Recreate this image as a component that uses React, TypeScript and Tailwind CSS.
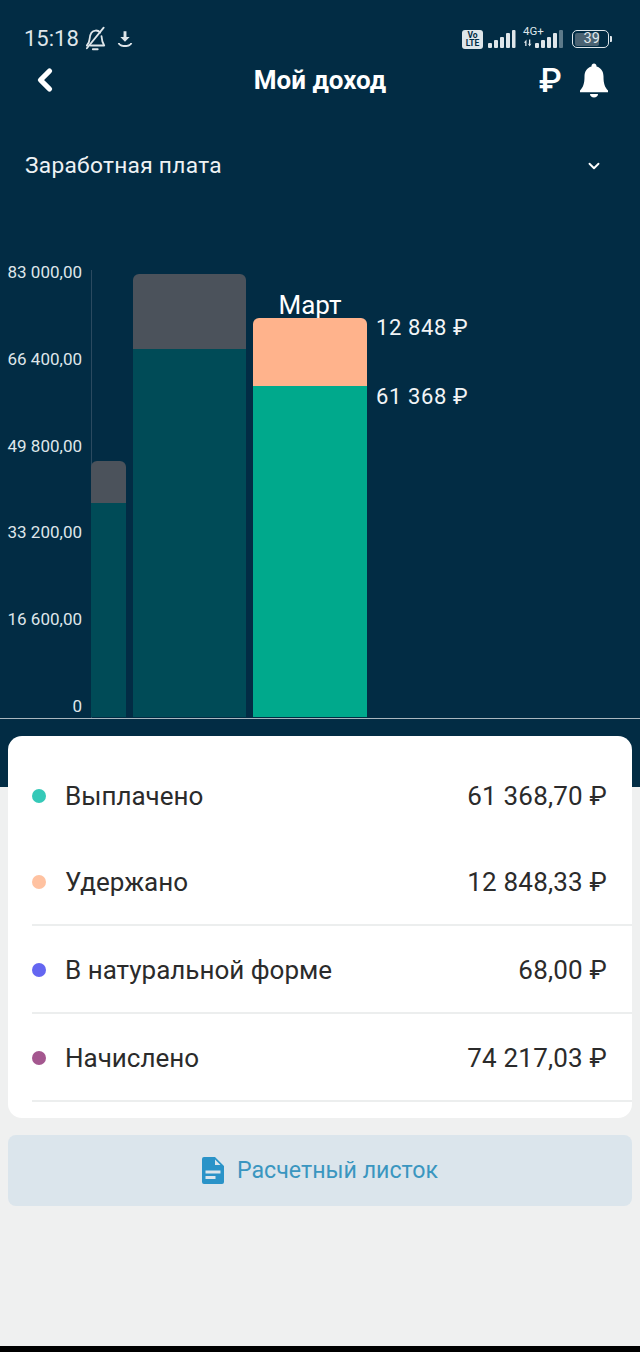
import { ChevronDown, ChevronLeft } from "lucide-react";

const AXIS = ["83 000,00", "66 400,00", "49 800,00", "33 200,00", "16 600,00", "0"];

const ROWS = [
  { label: "Удержано", value: "12 848,33 ₽", dot: "bg-[#ffc2a1]" },
  { label: "В натуральной форме", value: "68,00 ₽", dot: "bg-[#6466f1]" },
  { label: "Начислено", value: "74 217,03 ₽", dot: "bg-[#a4578f]" },
];

function StatusBar() {
  return (
    <div className="flex h-[22px] items-center justify-between pl-6 pr-[28px] text-[#dfe6ea]">
      <div className="flex items-center">
        <span className="text-[22px] leading-none">15:18</span>
        <svg className="ml-[4px] h-[26px] w-[24px]" viewBox="0 0 22 24" fill="none" stroke="currentColor" strokeWidth="1.7" strokeLinecap="round" strokeLinejoin="round">
          <path d="M3.500 18c1.700-1.800 2.300-3.500 2.500-6C6.300 7.500 8 4.500 11.500 4.200c1.800-.1 3.300.6 4.300 1.800M17 9.500c.2 3.500.9 6 2.500 8.500H7" />
          <path d="M9 21.500h4.500" />
          <path d="M3.500 20.500 19 1.500" />
        </svg>
        <svg className="ml-[8px] h-[20px] w-[20px]" viewBox="0 0 18 18" fill="currentColor">
          <path d="M7.700 2h2.600v5.200h2.900L9 11.500 4.800 7.200h2.900z" />
          <path d="M2.500 12.500h1.700c.5 1.200 2.400 2 4.800 2s4.300-.8 4.800-2h1.700c-.5 2.200-3.100 3.600-6.500 3.600s-6-1.400-6.500-3.600z" />
        </svg>
      </div>
      <div className="flex items-center">
        <div className="flex h-[19px] w-[21px] flex-col items-center justify-center rounded-[3px] bg-[#dfe6ea] text-[8.500px] font-bold leading-[8px] text-[#022c44]">
          <span>Vo</span>
          <span>LTE</span>
        </div>
        <svg className="ml-[5px] h-[20px] w-[28px]" viewBox="0 0 28 20" fill="currentColor">
          <rect x="0" y="14" width="4" height="5" rx="1" />
          <rect x="6" y="11" width="4" height="8" rx="1" />
          <rect x="12" y="8" width="4" height="11" rx="1" />
          <rect x="18" y="4" width="4" height="15" rx="1" />
          <rect x="24" y="1" width="3.500" height="18" rx="1" />
        </svg>
        <div className="relative ml-[7px] h-[20px] w-[40px]">
          <span className="absolute left-0 top-[-4px] text-[11.500px] leading-[12px]">4G+</span>
          <svg className="h-[20px] w-[40px]" viewBox="0 0 40 20" fill="currentColor">
            <path d="M1 13.500 3.500 10.500V17H2.200v-3zM6 10.500h1.300V15l1.200-.5L6.600 17.500 4.800 14.500l1.200.5z" />
            <rect x="12" y="14" width="4" height="5" rx="1" />
            <rect x="18" y="11" width="4" height="8" rx="1" />
            <rect x="24" y="8" width="4" height="11" rx="1" />
            <rect x="30" y="4" width="4" height="15" rx="1" />
            <rect x="36" y="1" width="4" height="18" rx="1" fill="#5d7a8a" />
          </svg>
        </div>
        <div className="ml-[9px] flex items-center">
          <div className="flex h-[18px] w-[37px] items-center rounded-[5px] border-[1.500px] border-[#dfe6ea] p-[1.500px]">
            <div className="flex h-full w-[24px] items-center rounded-[2px] bg-[#4a6272] pl-[9px] text-[14.500px] leading-none">
              <span>39</span>
            </div>
          </div>
          <div className="ml-[1px] h-[6px] w-[2px] rounded-r-[1px] bg-[#dfe6ea]" />
        </div>
      </div>
    </div>
  );
}

function Chart() {
  return (
    <div className="mt-[82px] flex h-[457px] items-end border-b border-[#aab7bf]">
      <div className="flex h-[454px] w-[82px] flex-col items-end justify-between self-start text-[17px] leading-[20px] text-[#dfe6ea]">
        {AXIS.map((v) => (
          <span key={v}>{v}</span>
        ))}
      </div>
      <div className="ml-[9px] flex h-[448px] items-end gap-[7px] border-l border-[#2b4a60] pb-px">
        <div className="-ml-px flex h-[256px] w-[35px] flex-col overflow-hidden rounded-t-[6px]">
          <div className="h-[42px] bg-[#4b525b]" />
          <div className="flex-1 bg-[#004b57]" />
        </div>
        <div className="flex h-[443px] w-[113px] flex-col overflow-hidden rounded-t-[6px]">
          <div className="h-[75px] bg-[#4b525b]" />
          <div className="flex-1 bg-[#004b57]" />
        </div>
        <div className="flex w-[114px] flex-col items-center">
          <span className="-mb-[1px] text-[26px] leading-[28px] text-white">Март</span>
          <div className="flex h-[399px] w-full flex-col overflow-hidden rounded-t-[6px]">
            <div className="h-[68px] bg-[#ffb38c]" />
            <div className="flex-1 bg-[#00a98c]" />
          </div>
        </div>
        <div className="ml-[2px] flex h-[399px] flex-col text-[22px] leading-[26px] tracking-[0.6px] text-[#f1f4f6]">
          <span className="mt-[-3px]">12 848 ₽</span>
          <span className="mt-[43px]">61 368 ₽</span>
        </div>
      </div>
    </div>
  );
}

export default function App() {
  return (
    <div className="flex h-[1352px] w-[640px] flex-col overflow-hidden bg-[#eff0f0] font-['Roboto',sans-serif]">
      <div className="h-[787px] shrink-0 bg-[#022c44] pt-[28px] text-white">
        <StatusBar />
        <div className="relative mt-[8px] flex h-[44px] items-center justify-center">
          <ChevronLeft className="absolute left-[27px] h-[36px] w-[36px]" strokeWidth={3.500} />
          <h1 className="text-[26px] font-bold leading-none">Мой доход</h1>
          <span className="absolute left-[539px] text-[33px] font-medium leading-none">₽</span>
          <svg className="absolute left-[578px] h-[36px] w-[32px]" viewBox="0 0 32 36" fill="currentColor">
            <path d="M16 1.500c-1.400 0-2.500 1-2.500 2.400v.6C8.800 5.700 6.500 9.800 6.500 14.500c0 7-1.200 10.500-4.500 14v1.800h28v-1.800c-3.300-3.500-4.500-7-4.500-14 0-4.700-2.300-8.800-7-10v-.6c0-1.400-1.100-2.400-2.500-2.400z" />
            <path d="M12 32h8c0 2-1.800 3.500-4 3.500s-4-1.500-4-3.500z" />
          </svg>
        </div>
        <div className="mt-[50px] flex items-center justify-between pl-[25px] pr-[37px]">
          <span className="text-[22.700px] leading-[28px] tracking-[0.3px] text-[#eef2f4]">Заработная плата</span>
          <ChevronDown className="h-[18px] w-[18px]" strokeWidth={2.500} />
        </div>
        <Chart />
      </div>

      <div className="mx-2 -mt-[51px] rounded-[14px] bg-white pb-4 pt-[17px] text-[26px] text-[#2b2b2b]">
        <div className="flex h-[85px] items-center pl-6 pr-[25px] pt-px">
          <span className="h-[14px] w-[14px] rounded-full bg-[#35c9b8]" />
          <span className="ml-[19px]">Выплачено</span>
          <span className="ml-auto tracking-[0.2px]">61 368,70 ₽</span>
        </div>
        {ROWS.map((r) => (
          <div key={r.label} className="ml-6 flex h-[88px] items-center border-b-2 border-[#eceeee] pr-[25px] pt-[2px]">
            <span className={`h-[14px] w-[14px] rounded-full ${r.dot}`} />
            <span className="ml-[19px]">{r.label}</span>
            <span className="ml-auto tracking-[0.2px]">{r.value}</span>
          </div>
        ))}
      </div>

      <button className="mx-2 mt-[17px] flex h-[71px] items-center justify-center rounded-[8px] bg-[#dbe5ec] text-[#3a96c0]">
        <svg className="h-[27px] w-[22px]" viewBox="0 0 22 27" fill="#2a93c8">
          <path fillRule="evenodd" d="M2 0h11l9 9v16a2 2 0 0 1-2 2H2a2 2 0 0 1-2-2V2a2 2 0 0 1 2-2zM13 2.500V8h5.500zM3.500 13.500v3h15v-3zM3.500 19v3h10v-3z" />
        </svg>
        <span className="ml-[13px] text-[23.200px] leading-none">Расчетный листок</span>
      </button>

      <div className="mt-auto h-[6px] bg-black" />
    </div>
  );
}
